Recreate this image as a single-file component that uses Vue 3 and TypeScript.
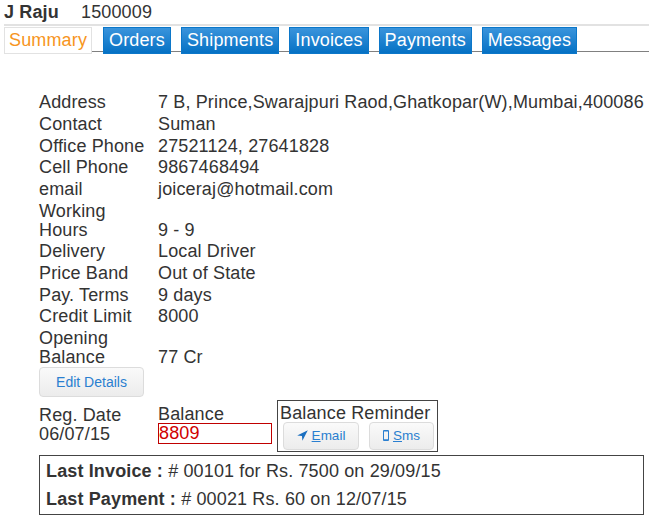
<template>
  <div class="page">
    <div class="customer-head">
      <b class="customer-head__name">J Raju</b>
      <span class="customer-head__code">1500009</span>
    </div>
    <ul class="tabs">
      <li
        v-for="tab in tabs"
        :key="tab"
        class="tabs__item"
        :class="{ 'tabs__item_active': tab === active }"
      >
        {{ tab }}
      </li>
    </ul>

    <div class="details">
      <template v-for="row in rows" :key="row.label">
        <div class="details__label">{{ row.label }}</div>
        <div class="details__value">{{ row.value }}</div>
      </template>
    </div>

    <button class="btn btn_edit">Edit Details</button>

    <div class="summary">
      <div class="summary__col summary__col_date">
        <div>Reg. Date</div>
        <div>06/07/15</div>
      </div>
      <div class="summary__col summary__col_balance">
        <div>Balance</div>
        <div class="balance-input">8809</div>
      </div>
      <div class="reminder">
        <div class="reminder__title">Balance Reminder</div>
        <div class="reminder__actions">
          <button class="btn btn_small btn_email">
            <svg class="icon" viewBox="0 0 12 12" width="11" height="11">
              <path d="M11.8 .2 .2 6.1 5.4 6.6 5.9 11.8Z" fill="#1a6fc0" />
            </svg>
            <span><u>E</u>mail</span>
          </button>
          <button class="btn btn_small btn_sms">
            <svg class="icon" viewBox="0 0 6 11" width="6" height="11">
              <path fill-rule="evenodd" d="M1 0h4a1 1 0 0 1 1 1v9a1 1 0 0 1-1 1H1a1 1 0 0 1-1-1V1a1 1 0 0 1 1-1ZM1 1.4v7.8h4V1.4Z" fill="#2a7fd0" />
            </svg>
            <span><u>S</u>ms</span>
          </button>
        </div>
      </div>
    </div>

    <div class="last-box">
      <div class="last-box__line"><b>Last Invoice :</b> # 00101 for Rs. 7500 on 29/09/15</div>
      <div class="last-box__line"><b>Last Payment :</b> # 00021 Rs. 60 on 12/07/15</div>
    </div>
  </div>
</template>

<script setup lang="ts">
const tabs = ["Summary", "Orders", "Shipments", "Invoices", "Payments", "Messages"];
const active = "Summary";

const rows = [
  { label: "Address", value: "7 B, Prince,Swarajpuri Raod,Ghatkopar(W),Mumbai,400086" },
  { label: "Contact", value: "Suman" },
  { label: "Office Phone", value: "27521124, 27641828" },
  { label: "Cell Phone", value: "9867468494" },
  { label: "email", value: "joiceraj@hotmail.com" },
  { label: "Working Hours", value: "9 - 9" },
  { label: "Delivery", value: "Local Driver" },
  { label: "Price Band", value: "Out of State" },
  { label: "Pay. Terms", value: "9 days" },
  { label: "Credit Limit", value: "8000" },
  { label: "Opening Balance", value: "77 Cr" },
];
</script>

<style scoped>
.page {
  width: 649px;
  height: 516px;
  overflow: hidden;
  font-family: "Liberation Sans", Arial, sans-serif;
  font-size: 18px;
  letter-spacing: 0.14px;
  line-height: 19px;
  color: #333;
}

.customer-head {
  display: flex;
  height: 24px;
  padding: 3px 0 0 4px;
  box-sizing: border-box;
}

.customer-head__name {
  width: 77px;
}

.tabs {
  display: flex;
  gap: 10px;
  height: 28px;
  margin: 0 0 0 4px;
  padding: 1px 0 0;
  box-sizing: border-box;
  list-style: none;
  border-top: 2px solid #e2e2e2;
  border-bottom: 1px solid #808080;
}

.tabs__item {
  height: 27px;
  padding: 0 5px;
  box-sizing: border-box;
  border: 1px solid #0c77c9;
  background: linear-gradient(#3a94dc, #0571c4);
  color: #fff;
  line-height: 25px;
  letter-spacing: 0.15px;
}

.tabs__item_active {
  width: 88px;
  padding: 0 4px;
  margin-right: 1px;
  border: 1px solid #e2e2e2;
  background: #fff;
  color: #f7951d;
}

.details {
  display: grid;
  grid-template-columns: 119px 1fr;
  row-gap: 2.7px;
  margin: 41.3px 0 0 39px;
  white-space: nowrap;
}

.details__label {
  white-space: normal;
  width: 110px;
}

.details__value {
  align-self: end;
}

.btn {
  border: 1px solid #dcdcdc;
  border-radius: 4px;
  background: linear-gradient(#fafafa, #ececec);
  color: #2a7fd0;
  font-family: inherit;
  letter-spacing: 0;
  padding: 0;
}

.btn_edit {
  display: block;
  width: 105px;
  height: 30px;
  margin: -0.3px 0 0 39px;
  font-size: 14px;
}

.btn_small {
  display: flex;
  align-items: center;
  justify-content: center;
  gap: 4px;
  height: 28px;
  font-size: 13.5px;
}

.btn_email {
  width: 76px;
}

.btn_sms {
  width: 65px;
}

.summary {
  display: flex;
  margin: 3px 0 0 39px;
}

.summary__col {
  padding-top: 5px;
}

.summary__col_date {
  width: 119px;
  padding-top: 6px;
}

.summary__col_balance {
  width: 114px;
  margin-right: 5px;
}

.balance-input {
  height: 21px;
  margin-top: -1px;
  border: 1px solid #c00000;
  box-sizing: border-box;
  color: #d00000;
  line-height: 19px;
}

.reminder {
  width: 161px;
  height: 52px;
  box-sizing: border-box;
  border: 1px solid #444;
  padding: 3px 0 0 2px;
}

.reminder__actions {
  display: flex;
  gap: 10px;
  margin: -1px 0 0 3px;
}

.last-box {
  width: 605px;
  height: 60px;
  box-sizing: border-box;
  margin: 3px 0 0 39px;
  padding: 6px 6px 0;
  border: 1px solid #444;
}

.last-box__line {
  height: 28px;
}
</style>
